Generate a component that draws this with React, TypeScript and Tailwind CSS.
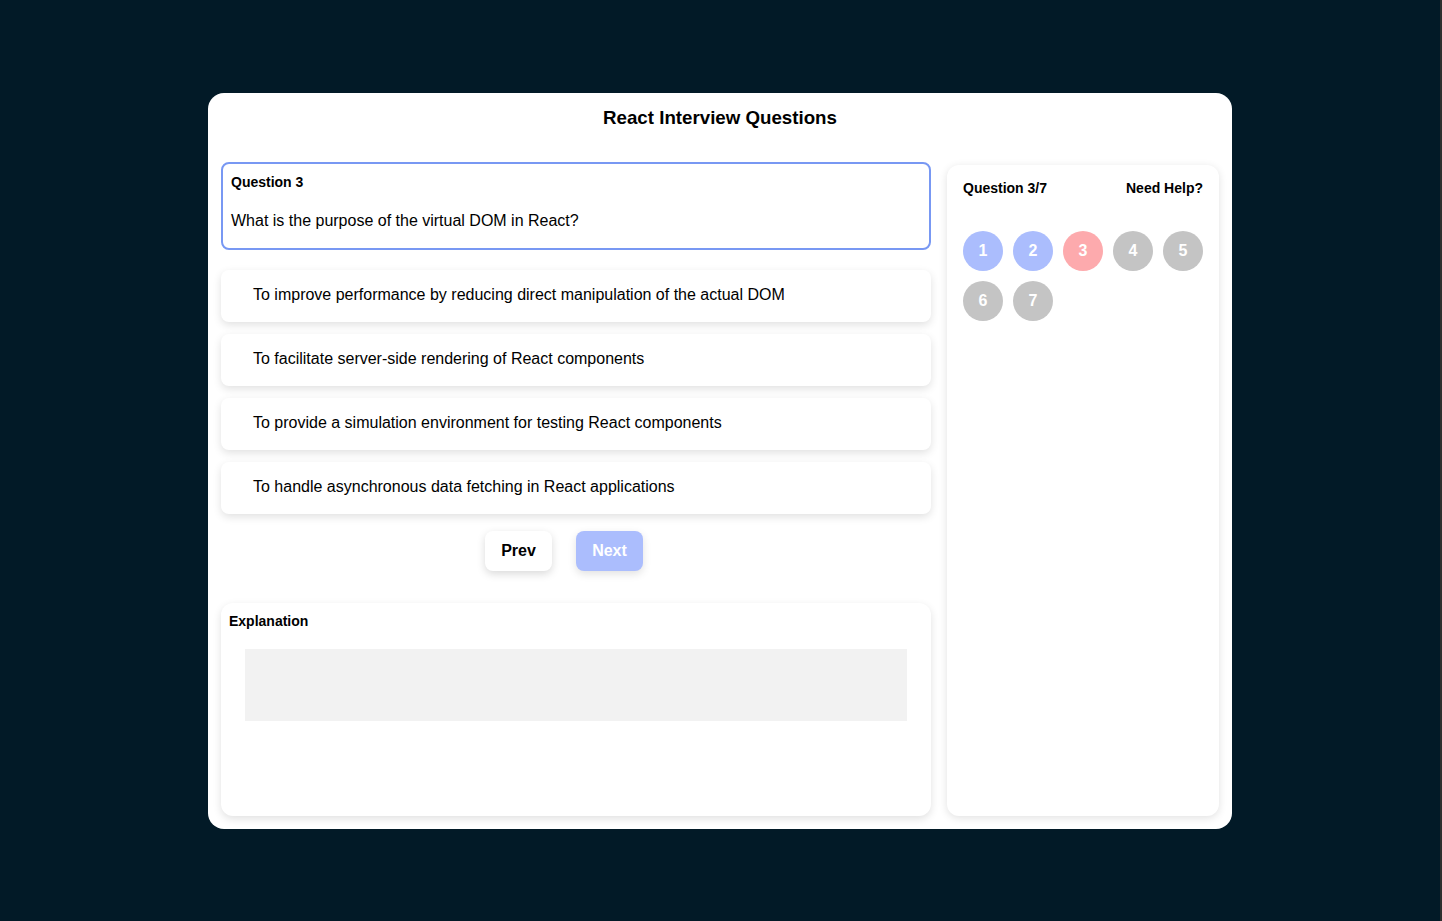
import React from "react";

const options = [
  "To improve performance by reducing direct manipulation of the actual DOM",
  "To facilitate server-side rendering of React components",
  "To provide a simulation environment for testing React components",
  "To handle asynchronous data fetching in React applications",
];

const circles: { n: number; c: string }[] = [
  { n: 1, c: "bg-[#abbdfd]" },
  { n: 2, c: "bg-[#abbdfd]" },
  { n: 3, c: "bg-[#fdaaad]" },
  { n: 4, c: "bg-[#c4c4c4]" },
  { n: 5, c: "bg-[#c4c4c4]" },
  { n: 6, c: "bg-[#c4c4c4]" },
  { n: 7, c: "bg-[#c4c4c4]" },
];

export default function App() {
  return (
    <div
      className="min-h-[921px] w-full bg-[#021a27] flex"
      style={{ fontFamily: '"Liberation Sans", Arial, sans-serif' }}
    >
      <div className="flex-1 flex justify-center pt-[93px]">
        <div className="w-[1024px] h-[736px] bg-white rounded-[16px] px-[13px] pb-[13px] flex flex-col text-black">
          <h3 className="text-[18.72px] font-bold text-center leading-[22px] pt-[14px] h-[69px]">
            React Interview Questions
          </h3>
          <div className="flex gap-[16px] flex-1">
            <div className="w-[710px] flex flex-col">
              <div className="h-[88px] border-2 border-[#7898f3] rounded-[8px] px-[8px] pt-[8px]">
                <div className="text-[14px] font-bold leading-[20px]">Question 3</div>
                <div className="text-[16px] leading-[18px] mt-[20px]">
                  What is the purpose of the virtual DOM in React?
                </div>
              </div>
              <div className="flex flex-col gap-[12px] mt-[20px]">
                {options.map((o) => (
                  <div
                    key={o}
                    className="h-[52px] rounded-[8px] bg-white shadow-[0_3px_8px_rgba(0,0,0,0.12)] flex items-center pl-[32px] pb-[2px] text-[16px]"
                  >
                    {o}
                  </div>
                ))}
              </div>
              <div className="flex justify-center gap-[24px] mt-[17px] pr-[24px]">
                <button className="h-[40px] w-[67px] rounded-[8px] bg-white shadow-[0_3px_8px_rgba(0,0,0,0.15)] text-[16px] font-bold text-black">
                  Prev
                </button>
                <button className="h-[40px] w-[67px] rounded-[8px] bg-[#abbdfd] shadow-[0_3px_8px_rgba(0,0,0,0.12)] text-[16px] font-bold text-white">
                  Next
                </button>
              </div>
              <div className="mt-[32px] flex-1 rounded-[12px] bg-white shadow-[0_3px_8px_rgba(0,0,0,0.12)] px-[8px] pt-[8px]">
                <div className="text-[14px] font-bold leading-[20px]">Explanation</div>
                <div className="mx-[16px] mt-[18px] h-[72px] bg-[#f2f2f2]" />
              </div>
            </div>
            <div className="w-[272px] mt-[3px] rounded-[12px] bg-white shadow-[0_2px_8px_rgba(0,0,0,0.12)] px-[16px] pt-[13px]">
              <div className="flex justify-between text-[14px] font-bold leading-[20px]">
                <span>Question 3/7</span>
                <span>Need Help?</span>
              </div>
              <div className="flex flex-wrap gap-[10px] mt-[33px]">
                {circles.map((c) => (
                  <div
                    key={c.n}
                    className={`w-[40px] h-[40px] rounded-full ${c.c} flex items-center justify-center text-white font-bold text-[16px]`}
                  >
                    {c.n}
                  </div>
                ))}
              </div>
            </div>
          </div>
        </div>
      </div>
      <div className="w-[2px] bg-[#2e2e2e]" />
    </div>
  );
}
